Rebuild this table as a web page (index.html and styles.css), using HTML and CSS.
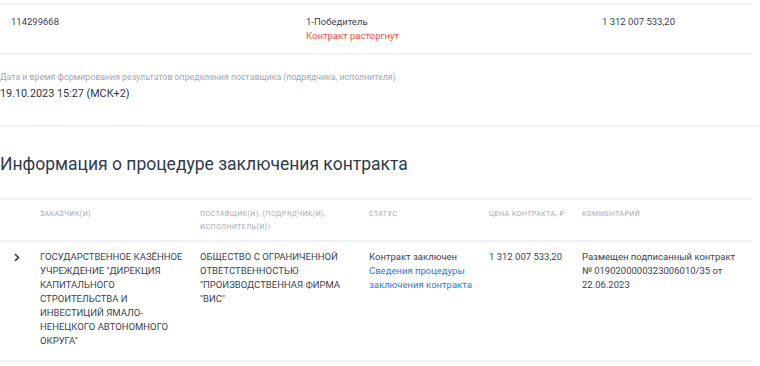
FILE: index.html
```html
<!DOCTYPE html>
<html lang="ru">
<head>
<meta charset="utf-8">
<link rel="stylesheet" href="styles.css">
</head>
<body>
<div class="page">
  <div class="result-row">
    <div class="rc rc-num">114299668</div>
    <div class="rc rc-status">
      <div>1-Победитель</div>
      <div class="red">Контракт расторгнут</div>
    </div>
    <div class="rc rc-price">1 312 007 533,20</div>
  </div>

  <div class="date-block">
    <div class="label">Дата и время формирования результатов определения поставщика (подрядчика, исполнителя)</div>
    <div class="value">19.10.2023 15:27 (МСК+2)</div>
  </div>

  <h2 class="section-title">Информация о процедуре заключения контракта</h2>

  <div class="table">
    <div class="thead">
      <div class="th"></div>
      <div class="th">Заказчик(и)</div>
      <div class="th">Поставщик(и), (подрядчик(и), исполнитель(и))</div>
      <div class="th">Статус</div>
      <div class="th">Цена контракта, ₽</div>
      <div class="th">Комментарий</div>
    </div>
    <div class="tr">
      <div class="td td-toggle">
        <svg width="8" height="9" viewBox="0 0 8 9"><path d="M2 1.2 L5.4 4.5 L2 7.8" fill="none" stroke="#3a4150" stroke-width="1.7"/></svg>
      </div>
      <div class="td upper">Государственное казённое учреждение "Дирекция капитального строительства и инвестиций Ямало-Ненецкого автономного округа"</div>
      <div class="td upper">Общество с ограниченной ответственностью "Производственная фирма "ВИС"</div>
      <div class="td">Контракт заключен<br><a class="link" href="#">Сведения процедуры заключения контракта</a></div>
      <div class="td">1 312 007 533,20</div>
      <div class="td">Размещен подписанный контракт № 0190200000323006010/35 от 22.06.2023</div>
    </div>
  </div>
</div>
</body>
</html>
```

FILE: styles.css
```css
* { box-sizing: border-box; }
html, body { margin: 0; padding: 0; background: #fff; }
body {
  font-family: Roboto, "Liberation Sans", Arial, sans-serif;
  color: #3b4253;
  font-size: 9.5px;
  line-height: 14px;
}
.page { width: 760px; padding-top: 3px; }

.result-row {
  width: 752px;
  border-top: 2px solid #f1f2f7;
  border-bottom: 2px solid #f1f2f7;
  display: grid;
  grid-template-columns: 306px 296px 150px;
  padding: 10px 0 13px 11px;
  height: 52px;
}
.rc-status { margin-left: -11px; }
.rc-price { margin-left: -11px; }
.red { color: #f24d48; }

.date-block {
  padding: 16px 0 23px 0;
  border-bottom: 2px solid #f1f2f7;
}
.label { color: #a0a7b8; font-size: 8.75px; line-height: 13px; }
.value { color: #2f3545; font-size: 10.8px; line-height: 16px; margin-top: 2px; }

.section-title {
  margin: 0;
  font-weight: 400;
  font-size: 17.5px;
  line-height: 24px;
  color: #2f3a4f;
  padding: 25px 0 22px 0;
}

.table { width: 752px; }
.thead, .tr {
  display: grid;
  grid-template-columns: 40px 160px 169px 120px 93px 170px;
}
.thead {
  border-top: 2px solid #f1f2f7;
  border-bottom: 2px solid #f1f2f7;
  padding: 8px 0 8px 0;
  height: 44px;
}
.th {
  text-transform: uppercase;
  color: #a2a9bb;
  font-size: 7px;
  letter-spacing: 0.45px;
  line-height: 13px;
  padding-right: 8px;
}
.tr {
  padding: 8px 0 8px 0;
  border-bottom: 2px solid #f1f2f7;
  height: 120px;
}
.td { padding-right: 8px; }
.td-toggle { padding-left: 13px; padding-top: 2px; }
.upper { text-transform: uppercase; }
.link { color: #2a7be4; text-decoration: none; }
```
